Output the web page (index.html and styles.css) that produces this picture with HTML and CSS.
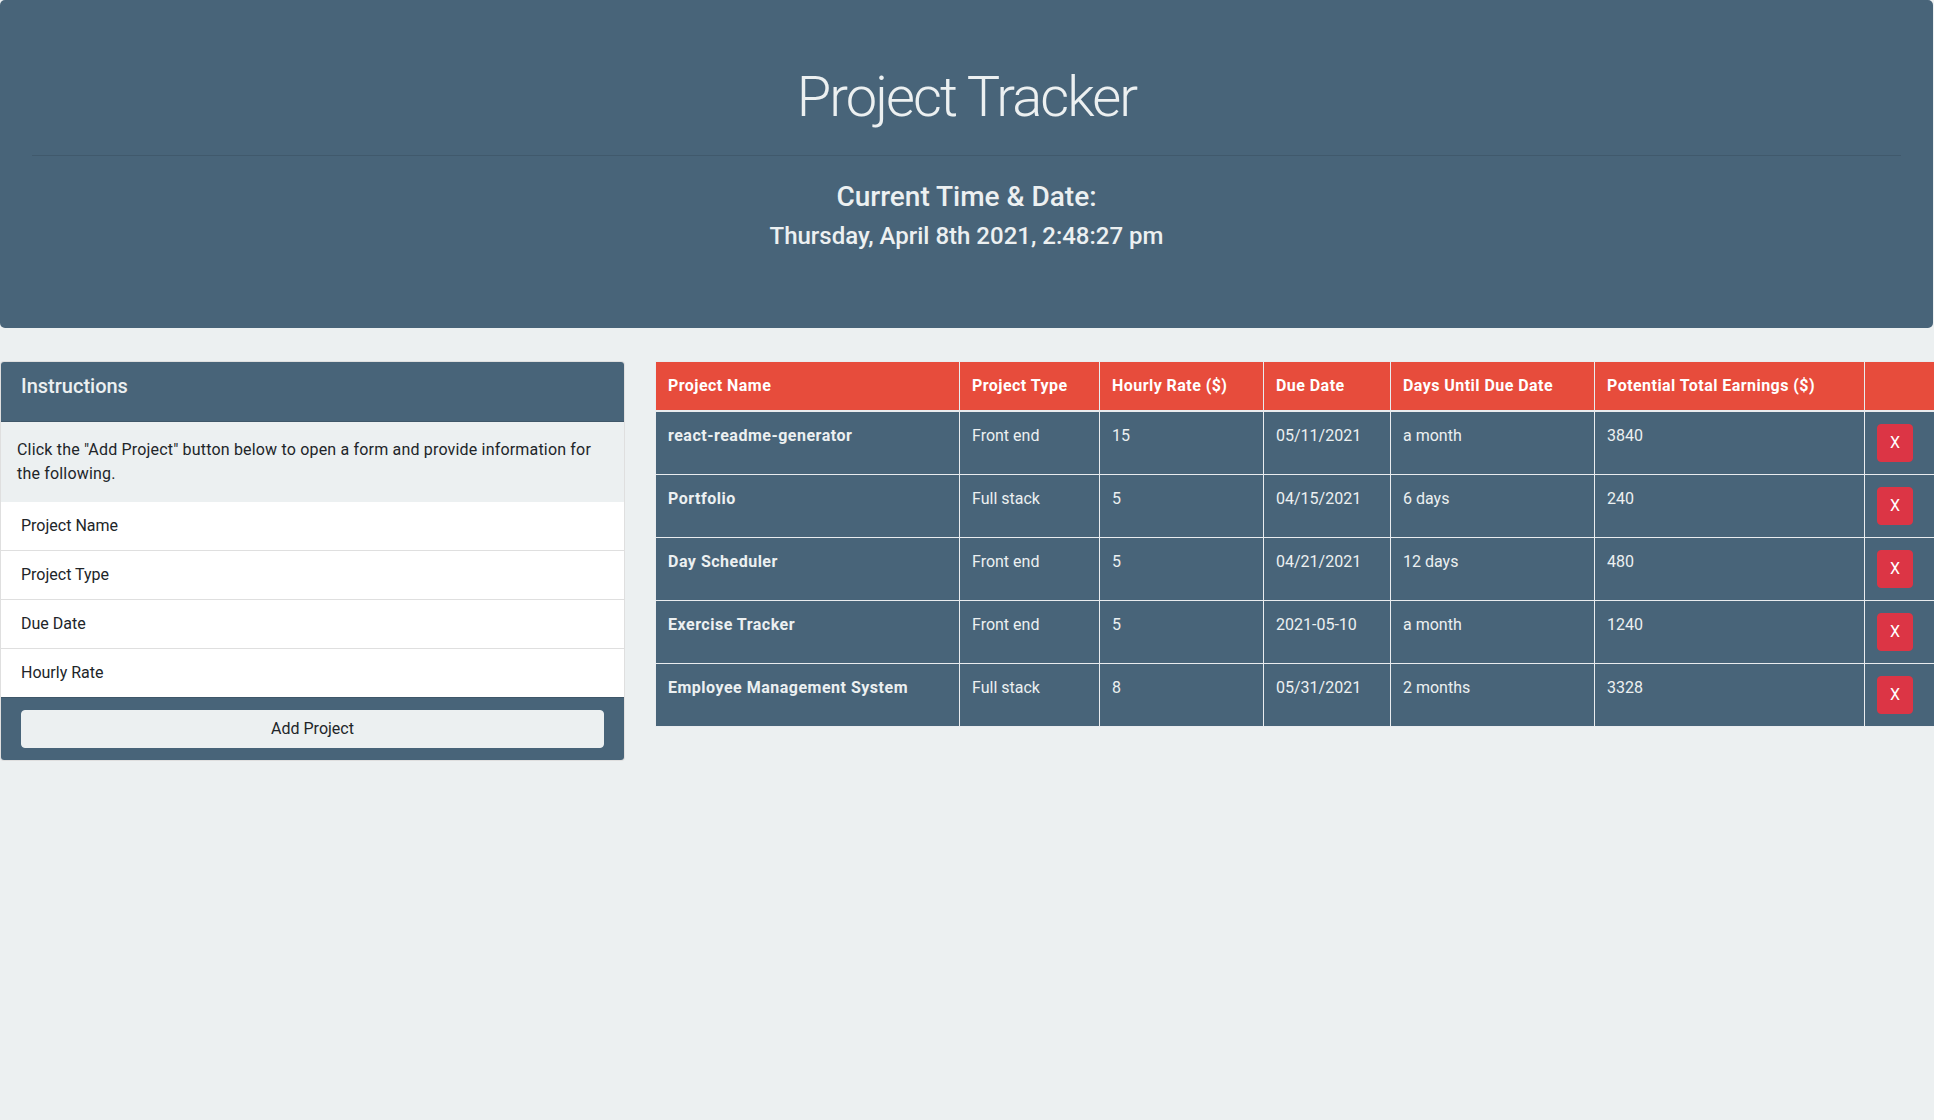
FILE: index.html
```html
<!DOCTYPE html>
<html lang="en">
<head>
<meta charset="utf-8">
<title>Project Tracker</title>
<link rel="stylesheet" href="styles.css">
</head>
<body>
<header class="jumbotron">
  <h1 class="title">Project Tracker</h1>
  <hr class="divider">
  <div class="clock">
    <h3 class="clock-label">Current Time &amp; Date:</h3>
    <h4 class="clock-value">Thursday, April 8th 2021, 2:48:27 pm</h4>
  </div>
</header>

<main class="row">
  <section class="card">
    <div class="card-header">
      <h5 class="card-title">Instructions</h5>
    </div>
    <p class="card-text">Click the "Add Project" button below to open a form and provide information for the following.</p>
    <ul class="list">
      <li class="list-item">Project Name</li>
      <li class="list-item">Project Type</li>
      <li class="list-item">Due Date</li>
      <li class="list-item">Hourly Rate</li>
    </ul>
    <div class="card-footer">
      <button class="btn-light" type="button">Add Project</button>
    </div>
  </section>

  <section class="table-wrap">
    <table class="projects">
      <colgroup>
        <col class="c-name"><col class="c-type"><col class="c-rate"><col class="c-due"><col class="c-days"><col class="c-earn"><col class="c-del">
      </colgroup>
      <thead>
        <tr>
          <th>Project Name</th>
          <th>Project Type</th>
          <th>Hourly Rate ($)</th>
          <th>Due Date</th>
          <th>Days Until Due Date</th>
          <th>Potential Total Earnings ($)</th>
          <th></th>
        </tr>
      </thead>
      <tbody>
        <tr>
          <td class="name">react-readme-generator</td>
          <td>Front end</td>
          <td>15</td>
          <td>05/11/2021</td>
          <td>a month</td>
          <td>3840</td>
          <td><button class="btn-danger" type="button">X</button></td>
        </tr>
        <tr>
          <td class="name">Portfolio</td>
          <td>Full stack</td>
          <td>5</td>
          <td>04/15/2021</td>
          <td>6 days</td>
          <td>240</td>
          <td><button class="btn-danger" type="button">X</button></td>
        </tr>
        <tr>
          <td class="name">Day Scheduler</td>
          <td>Front end</td>
          <td>5</td>
          <td>04/21/2021</td>
          <td>12 days</td>
          <td>480</td>
          <td><button class="btn-danger" type="button">X</button></td>
        </tr>
        <tr>
          <td class="name">Exercise Tracker</td>
          <td>Front end</td>
          <td>5</td>
          <td>2021-05-10</td>
          <td>a month</td>
          <td>1240</td>
          <td><button class="btn-danger" type="button">X</button></td>
        </tr>
        <tr>
          <td class="name">Employee Management System</td>
          <td>Full stack</td>
          <td>8</td>
          <td>05/31/2021</td>
          <td>2 months</td>
          <td>3328</td>
          <td><button class="btn-danger" type="button">X</button></td>
        </tr>
      </tbody>
    </table>
  </section>
</main>
</body>
</html>
```

FILE: styles.css
```css
* { box-sizing: border-box; }

html, body {
  margin: 0;
  padding: 0;
}

body {
  background: #ecf0f1;
  color: #212529;
  font-family: Roboto, "Noto Sans", "Liberation Sans", sans-serif;
  font-size: 16px;
  line-height: 1.5;
  overflow-x: hidden;
}

.jumbotron {
  background: #486479;
  border-radius: 5px;
  padding: 64px 32px 69px;
  margin: 0 1px 33px 0;
  text-align: center;
  color: #ecf0f1;
}

.title {
  font-size: 56px;
  font-weight: 300;
  line-height: 1.2;
  letter-spacing: -1.9px;
  margin: 0;
}

.divider {
  border: 0;
  border-top: 1px solid rgba(0, 0, 0, 0.1);
  margin: 24px 0 16px;
}

.clock {
  padding-top: 8px;
}

.clock-label {
  font-size: 28px;
  font-weight: 500;
  line-height: 1.2;
  margin: 0 0 8px;
}

.clock-value {
  font-size: 24px;
  font-weight: 500;
  line-height: 1.2;
  margin: 0 0 8px;
}

.row {
  display: flex;
  gap: 30px;
  align-items: flex-start;
}

.card {
  flex: 0 0 625px;
  border: 1px solid rgba(0, 0, 0, 0.125);
  border-radius: 4px;
  overflow: hidden;
  background: #fff;
}

.card-header {
  background: #486479;
  padding: 12px 20px 15px;
  border-bottom: 1px solid rgba(0, 0, 0, 0.125);
}

.card-title {
  margin: 0 0 8px;
  font-size: 20px;
  font-weight: 500;
  line-height: 1.2;
  color: #ecf0f1;
}

.card-text {
  margin: 0;
  padding: 16px;
  background: #ecf0f1;
  color: #212529;
  letter-spacing: 0.18px;
}

.list {
  list-style: none;
  margin: 0;
  padding: 0;
}

.list-item {
  background: #fff;
  padding: 12px 20px;
  border-bottom: 1px solid rgba(0, 0, 0, 0.125);
}

.list-item:last-child {
  border-bottom: 0;
}

.card-footer {
  background: #486479;
  padding: 12px 20px;
  border-top: 1px solid rgba(0, 0, 0, 0.125);
}

.btn-light {
  display: block;
  width: 100%;
  font: inherit;
  font-size: 16px;
  line-height: 24px;
  padding: 6px 12px;
  background: #ecf0f1;
  border: 1px solid #ecf0f1;
  border-radius: 4px;
  color: #212529;
  text-align: center;
}

.table-wrap {
  flex: 1 1 auto;
  min-width: 0;
}

.projects {
  width: 1279px;
  table-layout: fixed;
  border-collapse: collapse;
  border: 1px solid #e9ecef;
}

.c-name { width: 304px; }
.c-type { width: 140px; }
.c-rate { width: 164px; }
.c-due { width: 127px; }
.c-days { width: 204px; }
.c-earn { width: 270px; }
.c-del { width: 70px; }

.projects th,
.projects td {
  padding: 12px;
  border: 1px solid #e9ecef;
  text-align: left;
  vertical-align: top;
  white-space: nowrap;
}

.projects th {
  background: #e74c3c;
  color: #fff;
  font-weight: 700;
  letter-spacing: 0.45px;
  vertical-align: bottom;
  border-bottom-width: 2px;
}

.projects td {
  background: #486479;
  color: #ecf0f1;
}

.projects td.name {
  font-weight: 700;
  letter-spacing: 0.5px;
}

.btn-danger {
  font: inherit;
  font-size: 16px;
  line-height: 24px;
  padding: 6px 12px;
  background: #dc3545;
  border: 1px solid #dc3545;
  border-radius: 4px;
  color: #fff;
  letter-spacing: 0;
}
```
